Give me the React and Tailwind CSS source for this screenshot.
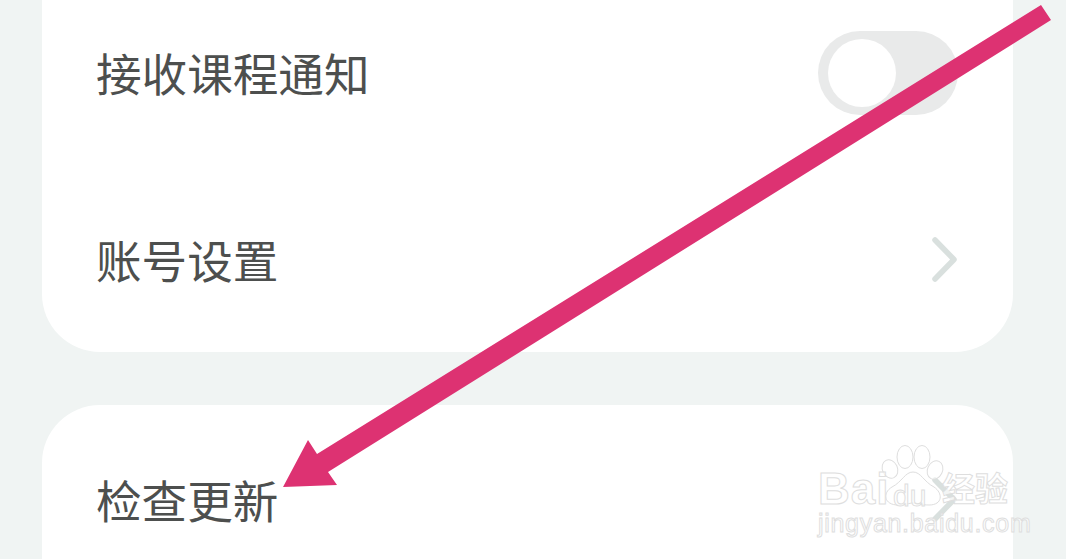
const cjk = "font-['Noto_Sans_CJK_SC','Noto_Sans',sans-serif]";

function Chevron() {
  return (
    <svg width="30" height="48" viewBox="0 0 30 48" fill="none" className="-mr-[2px]">
      <path d="M5 4L24 23.5L5 43" stroke="#d9e0de" strokeWidth="5.5" strokeLinecap="round" strokeLinejoin="round" />
    </svg>
  );
}

function Toggle() {
  return (
    <div className="flex h-[84px] w-[140px] items-center rounded-[42px] bg-[#e9eaea] pl-[10px]">
      <div className="h-[68px] w-[68px] rounded-full bg-white" />
    </div>
  );
}

function Row({ label, className, children }) {
  return (
    <div className={`flex items-center justify-between pl-[54px] pr-[55px] ${className}`}>
      <span className="text-[45.6px] leading-none text-[#4d4f4e]">{label}</span>
      {children}
    </div>
  );
}

function Watermark() {
  return (
    <div className="absolute left-[818px] top-[445px] h-[92px] w-[194px] font-['Liberation_Sans',sans-serif] text-white/70">
      <svg width="70" height="62" viewBox="0 0 70 62" fill="#ffffff" fillOpacity="0.6" stroke="#dedede" strokeWidth="1" className="absolute left-[60px] top-0">
        <ellipse cx="27" cy="12" rx="8" ry="11.5" />
        <ellipse cx="44" cy="12" rx="8" ry="11.5" />
        <ellipse cx="12" cy="24" rx="7.5" ry="9.5" transform="rotate(-25 12 24)" />
        <ellipse cx="57" cy="25" rx="7.5" ry="9.5" transform="rotate(25 57 25)" />
        <path d="M35 27C27 27 24 37 14 42C4 48 6 60 20 60C28 60 31 58 35 58C39 58 43 60 51 60C65 60 65 48 56 42C46 37 43 27 35 27Z" />
      </svg>
      <span className="absolute left-0 top-[22px] text-[44px] font-bold leading-[44px] tracking-[1px] [-webkit-text-stroke:1px_#dedede]">Bai</span>
      <span className="absolute left-[75px] top-[36px] text-[30px] leading-[30px] [-webkit-text-stroke:1px_#dedede]">du</span>
      <span className={`absolute left-[124px] top-[26px] text-[33px] font-bold leading-[33px] [-webkit-text-stroke:1px_#dedede] ${cjk}`}>经验</span>
      <span className="absolute left-0 top-[66px] text-[25px] leading-[25px] tracking-[0.7px] [-webkit-text-stroke:1px_#dedede]">jingyan.baidu.com</span>
    </div>
  );
}

function Arrow() {
  return (
    <svg width="1066" height="559" viewBox="0 0 1066 559" className="absolute left-0 top-0">
      <path d="M1041 5L1051 20L328 472L337 485L283 487L308 440L317 454Z" fill="#dd3272" />
    </svg>
  );
}

export default function App() {
  return (
    <div className={`relative h-[559px] w-[1066px] overflow-hidden bg-[#f0f4f3] pl-[42px] pr-[53px] ${cjk}`}>
      <div className="-mt-[20px] h-[372px] rounded-b-[58px] bg-white">
        <Row label="接收课程通知" className="h-[186px]">
          <Toggle />
        </Row>
        <Row label="账号设置" className="h-[186px] pt-[2px]">
          <Chevron />
        </Row>
      </div>
      <div className="mt-[53px] rounded-t-[58px] bg-white">
        <Row label="检查更新" className="h-[190px]">
          <Chevron />
        </Row>
      </div>
      <Watermark />
      <Arrow />
    </div>
  );
}
